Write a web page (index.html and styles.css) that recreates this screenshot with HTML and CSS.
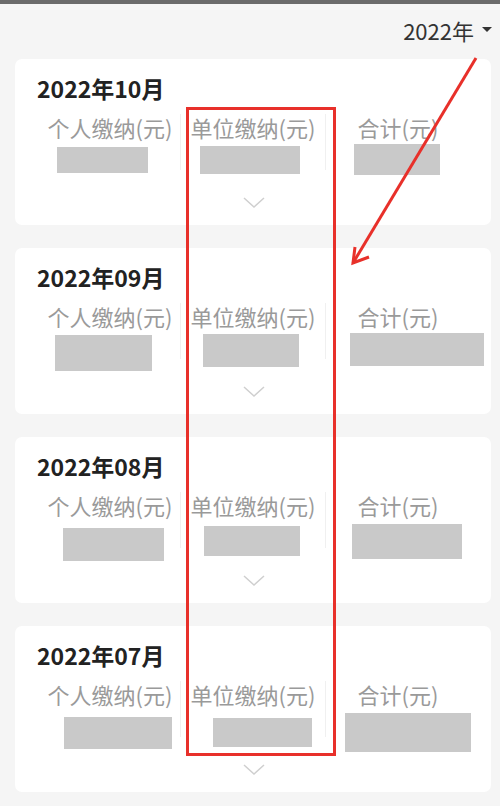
FILE: index.html
```html
<!DOCTYPE html>
<html lang="zh-CN">
<head>
    <meta charset="UTF-8">
    <meta name="viewport" content="width=device-width, initial-scale=1.0">
    <title>缴费记录</title>
    <link rel="stylesheet" href="styles.css">
</head>
<body>
    <div class="topbar"></div>
    <div class="header">
        <span class="year">2022年</span><span class="caret"></span>
    </div>

    <div class="list">
        <div class="card">
            <div class="title">2022年10月</div>
            <div class="cols">
                <div class="cell"><span class="label">个人缴纳(元)</span><i class="mask" style="margin:7px 0 0 17px;width:91px;height:26px"></i></div>
                <div class="cell"><span class="label">单位缴纳(元)</span><i class="mask" style="margin:6px 0 0 19px;width:100px;height:28px"></i></div>
                <div class="cell"><span class="label">合计(元)</span><i class="mask" style="margin:4px 0 0 28px;width:86px;height:31px"></i></div>
            </div>
            <svg class="chevron" width="22" height="12" viewBox="0 0 22 12"><polyline points="1,1 11,10 21,1"/></svg>
        </div>

        <div class="card">
            <div class="title">2022年09月</div>
            <div class="cols">
                <div class="cell"><span class="label">个人缴纳(元)</span><i class="mask" style="margin:6px 0 0 15px;width:97px;height:36px"></i></div>
                <div class="cell"><span class="label">单位缴纳(元)</span><i class="mask" style="margin:5px 0 0 22px;width:96px;height:33px"></i></div>
                <div class="cell"><span class="label">合计(元)</span><i class="mask" style="margin:4px 0 0 24px;width:134px;height:33px"></i></div>
            </div>
            <svg class="chevron" width="22" height="12" viewBox="0 0 22 12"><polyline points="1,1 11,10 21,1"/></svg>
        </div>

        <div class="card">
            <div class="title">2022年08月</div>
            <div class="cols">
                <div class="cell"><span class="label">个人缴纳(元)</span><i class="mask" style="margin:10px 0 0 23px;width:101px;height:33px"></i></div>
                <div class="cell"><span class="label">单位缴纳(元)</span><i class="mask" style="margin:8px 0 0 23px;width:96px;height:30px"></i></div>
                <div class="cell"><span class="label">合计(元)</span><i class="mask" style="margin:6px 0 0 26px;width:110px;height:35px"></i></div>
            </div>
            <svg class="chevron" width="22" height="12" viewBox="0 0 22 12"><polyline points="1,1 11,10 21,1"/></svg>
        </div>

        <div class="card">
            <div class="title">2022年07月</div>
            <div class="cols">
                <div class="cell"><span class="label">个人缴纳(元)</span><i class="mask" style="margin:10px 0 0 24px;width:108px;height:32px"></i></div>
                <div class="cell"><span class="label">单位缴纳(元)</span><i class="mask" style="margin:11px 0 0 32px;width:99px;height:29px"></i></div>
                <div class="cell"><span class="label">合计(元)</span><i class="mask" style="margin:6px 0 0 19px;width:126px;height:39px"></i></div>
            </div>
            <svg class="chevron" width="22" height="12" viewBox="0 0 22 12"><polyline points="1,1 11,10 21,1"/></svg>
        </div>
    </div>

    <!-- annotation drawn over the screenshot -->
    <svg class="marks" width="500" height="806" viewBox="0 0 500 806">
        <rect x="187.5" y="108.5" width="147" height="646"/>
        <line x1="476" y1="58" x2="353" y2="263"/>
        <polyline points="355,247 353,263 369,257"/>
    </svg>
</body>
</html>
```

FILE: styles.css
```css
* {
    box-sizing: border-box;
}
body {
    margin: 0;
    background: #f5f5f5;
    font-family: "Noto Sans CJK SC", "Noto Sans", sans-serif;
    color: #333;
    position: relative;
    height: 806px;
    overflow: hidden;
}
.topbar {
    height: 4px;
    background: #6b6b6b;
}
.header {
    height: 55px;
    display: flex;
    justify-content: flex-end;
    align-items: center;
    padding: 0 8px 4px 0;
}
.year {
    font-size: 22px;
    line-height: 28px;
    color: #333;
}
.caret {
    margin-left: 8px;
    width: 0;
    height: 0;
    border-left: 5px solid transparent;
    border-right: 5px solid transparent;
    border-top: 5px solid #333;
}
.list {
    padding: 0 9px 0 15px;
}
.card {
    height: 166px;
    margin-bottom: 23px;
    background: #fff;
    border-radius: 7px;
    padding: 15px 21px 0 22px;
    display: flex;
    flex-direction: column;
}
.title {
    font-size: 23px;
    line-height: 28px;
    font-weight: bold;
    color: #222;
}
.cols {
    margin: 12px 0 0 3px;
    display: grid;
    grid-template-columns: 140px 145px 145px;
}
.cell {
    height: 56px;
    display: flex;
    flex-direction: column;
    align-items: center;
}
.cell + .cell {
    border-left: 1px solid #f0f0f0;
}
.label {
    font-size: 22px;
    line-height: 26px;
    color: #9a9a9a;
    white-space: nowrap;
}
.mask {
    display: block;
    flex: none;
    align-self: flex-start;
    background: #c9c9c9;
}
.chevron {
    margin: 27px auto 0;
    display: block;
}
.chevron polyline {
    fill: none;
    stroke: #cfcfcf;
    stroke-width: 1.5;
}
.marks {
    position: absolute;
    top: 0;
    left: 0;
    pointer-events: none;
}
.marks rect,
.marks line,
.marks polyline {
    fill: none;
    stroke: #e8302a;
    stroke-width: 3;
}
```
